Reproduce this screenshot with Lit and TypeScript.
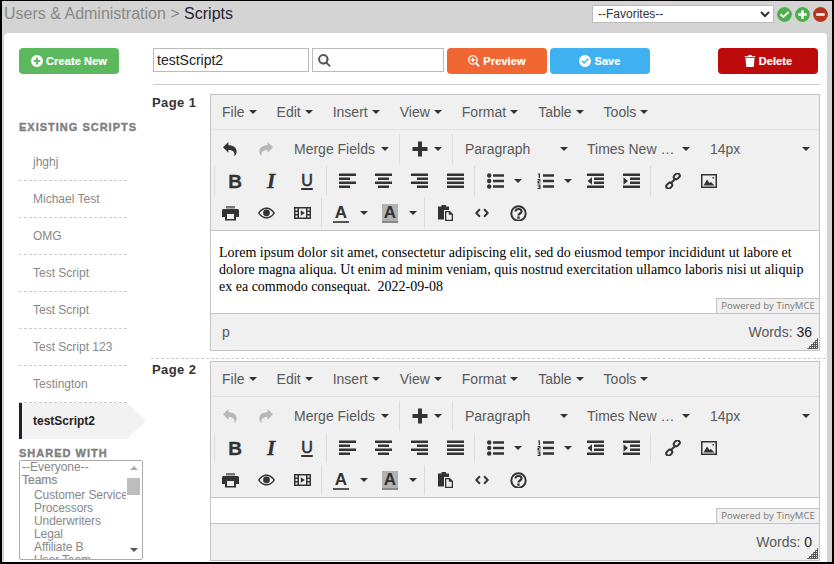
import { LitElement, css, html, svg } from 'lit';
import { customElement, property } from 'lit/decorators.js';

// toolbar glyphs, all on a 16 unit grid
const ICONS: Record<string, unknown> = {
  undo: svg`<path d="M1 6.2 6.4 1v3.2c5 0 8.6 2.4 8.2 7-.2 1.900-1.200 3.200-2.400 4 .9-3.600-.6-6.200-5.800-6.200v2.700z"/>`,
  redo: svg`<path d="M15 6.2 9.600 1v3.2c-5 0-8.600 2.400-8.200 7 .2 1.900 1.200 3.200 2.400 4-.9-3.600.6-6.200 5.800-6.200v2.700z"/>`,
  plus: svg`<path d="M6 .5h4v5.500h5.500v4H10v5.500H6V10H.5V6H6z"/>`,
  alignleft: svg`<path d="M0 .5h17v2.500H0zM0 4.500h11V7H0zM0 8.500h17V11H0zM0 12.500h11V15H0z"/>`,
  aligncenter: svg`<path d="M0 .5h17v2.500H0zM3 4.500h11V7H3zM0 8.500h17V11H0zM3 12.500h11V15H3z"/>`,
  alignright: svg`<path d="M0 .5h17v2.500H0zM6 4.500h11V7H6zM0 8.500h17V11H0zM6 12.500h11V15H6z"/>`,
  justify: svg`<path d="M0 .5h17v2.500H0zM0 4.500h17V7H0zM0 8.500h17V11H0zM0 12.500h17V15H0z"/>`,
  bullist: svg`<circle cx="2.200" cy="2.500" r="2.200"/><circle cx="2.200" cy="8" r="2.200"/><circle cx="2.200" cy="13.500" r="2.200"/><path d="M6 1.300h11v2.400H6zM6 6.800h11v2.400H6zM6 12.300h11v2.400H6z"/>`,
  numlist: svg`<path d="M1 .5h2v4.500H1.700V1.500H1zM.5 6h3v2.500H2v1h1.500v1H.5V7.700h1.700V7H.5zM.5 11.500h3V16h-3v-1h1.800v-.8H1.200v-.9h1.100v-.8H.5zM6 1.300h11v2.400H6zM6 6.800h11v2.400H6zM6 12.300h11v2.400H6z"/>`,
  outdent: svg`<path d="M0 .5h17v2.500H0zM7 4.500h10V7H7zM7 8.500h10V11H7zM0 12.500h17V15H0zM5 4.200v7.600L.5 8z"/>`,
  indent: svg`<path d="M0 .5h17v2.500H0zM7 4.500h10V7H7zM7 8.500h10V11H7zM0 12.500h17V15H0zM.5 4.200v7.600L5 8z"/>`,
  image: svg`<path fill-rule="evenodd" d="M0 1h16v14H0zM1.500 2.500v11h13v-11z"/><path d="M2.500 12.500 6 6.500l2.500 3.500 1.500-1 3.500 3.500zM11.500 4h1.500v1.500h-1.500z"/>`,
  print: svg`<path fill="#777" d="M4 1h9v2.500H4z"/><path fill-rule="evenodd" d="M1.500 4h14c.8 0 1.500.7 1.500 1.500V12h-3v3.500H3V12H0V5.500C0 4.700.7 4 1.500 4zM5 9v5h7V9z"/>`,
  film: svg`<path fill-rule="evenodd" d="M0 2h17v12H0zM1.500 3.500v2h2v-2zM1.500 7v2h2V7zM1.500 10.500v2h2v-2zM13.500 3.500v2h2v-2zM13.500 7v2h2V7zM13.500 10.500v2h2v-2zM5 3.500v9h7v-9z"/><path d="M6.800 5.300 10.800 8l-4 2.700z"/>`,
  paste: svg`<path fill-rule="evenodd" d="M5 0h3v1.500h3V5H6v9.500H0v-13h3.500V0z"/><path fill-rule="evenodd" d="M7 6h5l3 3v7H7zM8.300 7.300v7.400h5.400V9.800h-2.900V7.300z"/>`,
  code: svg`<path d="M5.200 3.500 6.600 4.900 3.700 8l2.900 3.100-1.400 1.400L1 8zM10.800 3.500 15 8l-4.200 4.500-1.400-1.400L12.300 8 9.400 4.900z"/>`,
  search: svg`<path fill-rule="evenodd" d="M6.500 0a6.500 6.500 0 0 1 5.200 10.400l4 4-1.600 1.600-4-4A6.500 6.500 0 1 1 6.500 0zm0 2.600a3.900 3.900 0 1 0 0 7.800 3.900 3.900 0 0 0 0-7.800z"/>`,
  searchplus: svg`<path fill-rule="evenodd" d="M6.500 0a6.500 6.500 0 0 1 5.200 10.400l4 4-1.600 1.600-4-4A6.500 6.500 0 1 1 6.500 0zm0 1.800a4.700 4.700 0 1 0 0 9.400 4.700 4.700 0 0 0 0-9.400z"/><path d="M5.600 3.500h1.800v2.100h2.100v1.800H7.400v2.100H5.600V7.400H3.500V5.600h2.100z"/>`,
  circleplus: svg`<path fill-rule="evenodd" d="M8 0a8 8 0 1 1 0 16A8 8 0 0 1 8 0zM6.700 3.500v3.200H3.500v2.600h3.200v3.200h2.600V9.300h3.200V6.700H9.300V3.500z"/>`,
  circlecheck: svg`<path fill-rule="evenodd" d="M8 0a8 8 0 1 1 0 16A8 8 0 0 1 8 0zm3.700 4.400L6.800 9.200 4.500 7 3.100 8.400l3.700 3.700 6.300-6.300z"/>`,
  trash: svg`<path d="M5 0h4l.6 1.500H14V3H0V1.500h4.400zM1 4h12l-.8 11c0 .6-.5 1-1 1H2.800c-.5 0-1-.4-1-1z"/>`,
};

const link = svg`<g fill="none" stroke="currentColor" stroke-width="2"><rect x="8.500" y="1" width="6.500" height="4.600" rx="2.300" transform="rotate(-45 11.750 3.300)"/><rect x="1" y="10.400" width="6.500" height="4.600" rx="2.300" transform="rotate(-45 4.250 12.700)"/><path d="M5.500 10.500l5-5"/></g>`;
const eye = svg`<path fill-rule="evenodd" d="M8.500 2.500c3.800 0 6.800 2.600 8.500 5.500-1.700 2.900-4.700 5.500-8.500 5.500S1.700 10.900 0 8c1.700-2.900 4.700-5.500 8.500-5.500zm0 1.400C5.700 3.900 3.200 5.600 1.700 8c1.500 2.400 4 4.100 6.800 4.100s5.300-1.700 6.800-4.100c-1.500-2.400-4-4.100-6.800-4.100z"/><circle cx="8.500" cy="7.800" r="3.400"/>`;
const help = svg`<circle cx="8.500" cy="8.500" r="7.200" fill="none" stroke="currentColor" stroke-width="2"/><path fill="none" stroke="currentColor" stroke-width="2.200" d="M5.600 6.500c0-1.600 1.300-2.500 2.900-2.500s3 .9 3 2.500c0 2-3 2-3 4"/><rect x="7.300" y="11.500" width="2.400" height="2.200"/>`;

function icon(name: string, cls = '') {
  const body = name === 'link' ? link : name === 'eye' ? eye : name === 'help' ? help : ICONS[name];
  const w = name === 'plus' || name === 'image' || name.startsWith('circle') || name.startsWith('search') ? 16 : name === 'trash' ? 14 : 17;
  return html`<svg class="ico ${cls}" viewBox="0 0 ${w} 16" width="${w}" height="16" fill="currentColor">${body}</svg>`;
}

const MENUS = ['File', 'Edit', 'Insert', 'View', 'Format', 'Table', 'Tools'];

@customElement('tiny-editor')
export class TinyEditor extends LitElement {
  @property() words = '0';
  @property() path = '';
  @property({ type: Boolean }) canUndo = false;

  static styles = css`
    :host {
      display: block;
      width: 610px;
      box-sizing: border-box;
      border: 1px solid #c4c4c4;
      background: #f0f0f0;
      color: #595959;
      font: 14px 'Liberation Sans', Arial, sans-serif;
    }
    .menubar {
      height: 34px;
      display: flex;
      align-items: center;
      padding-left: 1px;
      border-bottom: 1px solid #e2e2e2;
    }
    .menu {
      display: flex;
      align-items: center;
      gap: 4px;
      padding: 0 10px;
    }
    .caret {
      display: inline-block;
      width: 0;
      height: 0;
      border: 4px solid transparent;
      border-top-color: #333;
      border-bottom: 0;
    }
    .toolbar {
      height: 101px;
      box-sizing: border-box;
      padding-top: 4px;
      border-bottom: 1px solid #c4c4c4;
    }
    .row {
      height: 32px;
      display: flex;
      align-items: flex-start;
    }
    .row.second {
      padding-left: 2px;
    }
    .group {
      display: flex;
      height: 30px;
      align-items: center;
      padding-left: 2px;
    }
    .group.first {
      padding-left: 1px;
    }
    .group.wide {
      padding-left: 4px;
    }
    .group.sep {
      border-left: 1px solid #dcdcdc;
      margin-left: 1px;
    }
    .group.tight {
      padding-left: 1px;
    }
    .group.pushed {
      margin-left: 3px;
      padding-left: 3px;
    }
    .btn {
      width: 36px;
      height: 30px;
      display: flex;
      align-items: center;
      justify-content: center;
      color: #333;
      flex: none;
    }
    .btn.off {
      color: #b8b8b8;
    }
    .letter {
      font-size: 19px;
      line-height: 1;
      font-weight: 700;
      -webkit-text-stroke: 0.3px #333;
    }
    .letter.it {
      font-style: italic;
      font-family: 'Liberation Serif', serif;
      font-size: 21px;
    }
    .letter.un {
      font-size: 16px;
      font-weight: 400;
      text-decoration: underline;
      text-decoration-thickness: 2px;
      text-underline-offset: 2px;
      -webkit-text-stroke: 0.6px #333;
    }
    .split {
      display: flex;
      align-items: center;
      width: 50px;
      flex: none;
    }
    .split .caret {
      margin-left: 1px;
    }
    .split.small {
      width: 49px;
    }
    .split.small .caret {
      margin-left: -4px;
    }
    .split.color {
      width: 49px;
    }
    .swatch {
      width: 16px;
      height: 19px;
      display: flex;
      align-items: center;
      justify-content: center;
      font-size: 17px;
      line-height: 17px;
      font-weight: 700;
      border-bottom: 2px solid #555;
      box-sizing: border-box;
    }
    .swatch.bg {
      background: #b2b2b2;
      border-color: #888;
    }
    .pick {
      display: flex;
      align-items: center;
      justify-content: space-between;
      height: 30px;
      padding-left: 10px;
      box-sizing: border-box;
      flex: none;
    }
    .pick .caret {
      margin-right: 9px;
    }
    .pick.last {
      padding-left: 11px;
    }
    .content {
      position: relative;
      background: #fff;
      border-bottom: 1px solid #c4c4c4;
      color: #000;
      font: 14px/17px 'Liberation Serif', 'Times New Roman', serif;
      padding: 0 8px;
      box-sizing: border-box;
      min-height: 26px;
      overflow: hidden;
    }
    ::slotted(p) {
      margin: 13px 0 18px;
    }
    .brand {
      position: absolute;
      right: 0;
      bottom: 0;
      height: 15px;
      width: 103px;
      box-sizing: border-box;
      background: #f0f0f0;
      border: 1px solid #c4c4c4;
      border-width: 1px 0 0 1px;
      color: #777;
      font: 9.500px/14px 'Open Sans', sans-serif;
      letter-spacing: 0.05px;
      text-align: center;
      white-space: nowrap;
    }
    .status {
      position: relative;
      height: 36px;
      display: flex;
      align-items: center;
      justify-content: space-between;
      padding: 0 7px 0 11px;
    }
    .status b {
      font-weight: 400;
      color: #222;
    }
    .grip {
      position: absolute;
      right: 1px;
      bottom: 1px;
      width: 11px;
      height: 11px;
      background: repeating-linear-gradient(0deg, #555 0 1px, transparent 1px 2px),
        repeating-linear-gradient(90deg, #555 0 1px, #f0f0f0 1px 2px);
      clip-path: polygon(100% 0, 100% 100%, 0 100%);
    }
  `;

  private btn(name: string, off = false) {
    return html`<span class="btn ${off ? 'off' : ''}">${icon(name)}</span>`;
  }

  private split(name: string, small = false) {
    return html`<span class="split ${small ? 'small' : ''}">${this.btn(name)}<span class="caret"></span></span>`;
  }

  private pick(label: string, width: number, cls = '') {
    return html`<span class="pick ${cls}" style="width:${width}px"><span>${label}</span><span class="caret"></span></span>`;
  }

  private swatch(bg: boolean) {
    return html`<span class="split color"
      ><span class="btn"><span class="swatch ${bg ? 'bg' : ''}">A</span></span><span class="caret"></span
    ></span>`;
  }

  render() {
    return html`
      <div class="menubar">
        ${MENUS.map(m => html`<span class="menu">${m}<span class="caret"></span></span>`)}
      </div>
      <div class="toolbar">
        <div class="row">
          <div class="group first">
            ${this.btn('undo', !this.canUndo)}${this.btn('redo', true)} ${this.pick('Merge Fields', 114)}
          </div>
          <div class="group sep">${this.split('plus', true)}</div>
          <div class="group sep">
            ${this.pick('Paragraph', 122)}${this.pick('Times New …', 122)}${this.pick('14px', 120, 'last')}
          </div>
        </div>
        <div class="row second">
          <div class="group sep">
            <span class="btn"><span class="letter">B</span></span>
            <span class="btn"><span class="letter it">I</span></span>
            <span class="btn"><span class="letter un">U</span></span>
          </div>
          <div class="group sep">
            ${this.btn('alignleft')}${this.btn('aligncenter')}${this.btn('alignright')}${this.btn('justify')}
          </div>
          <div class="group sep">
            ${this.split('bullist')}${this.split('numlist')}${this.btn('outdent')}${this.btn('indent')}
          </div>
          <div class="group sep wide">${this.btn('link')}${this.btn('image')}</div>
        </div>
        <div class="row">
          <div class="group first">${this.btn('print')}${this.btn('eye')}${this.btn('film')}</div>
          <div class="group sep tight">${this.swatch(false)}${this.swatch(true)}</div>
          <div class="group sep pushed">${this.btn('paste')}${this.btn('code')}${this.btn('help')}</div>
        </div>
      </div>
      <div class="content">
        <slot></slot>
        <span class="brand">Powered by TinyMCE</span>
      </div>
      <div class="status">
        <span>${this.path}</span>
        <span>Words: <b>${this.words}</b></span>
        <span class="grip"></span>
      </div>
    `;
  }
}

const SCRIPTS = ['jhghj', 'Michael Test', 'OMG', 'Test Script', 'Test Script', 'Test Script 123', 'Testington'];
const TEAMS = ['Customer Service', 'Processors', 'Underwriters', 'Legal', 'Affiliate B', 'User Team'];

@customElement('app-root')
export class AppRoot extends LitElement {
  static styles = css`
    :host {
      display: flex;
      flex-direction: column;
      width: 834px;
      height: 564px;
      box-sizing: border-box;
      overflow: hidden;
      background: #d4d4d4;
      border: solid #000;
      border-width: 1px 2px 2px 2px;
      font: 12px 'Liberation Sans', Arial, sans-serif;
    }
    .head {
      height: 32px;
      flex: none;
      display: flex;
      align-items: flex-start;
      justify-content: space-between;
      padding: 4px 4px 0 2px;
      box-sizing: border-box;
      font-size: 16px;
      line-height: 18px;
      color: #888;
    }
    .crumb b {
      font-weight: 400;
      color: #2a2233;
    }
    .fav {
      display: flex;
      align-items: center;
      gap: 3px;
    }
    .fav select {
      width: 182px;
      height: 18px;
      box-sizing: border-box;
      margin: 0;
      padding: 0 1px;
      border: 1px solid #bbb;
      background: #fff;
      color: #333;
      font: 12px 'Liberation Sans', Arial, sans-serif;
      border-radius: 0;
    }
    .dot {
      width: 15px;
      height: 15px;
      border-radius: 50%;
      display: flex;
      align-items: center;
      justify-content: center;
      background: #fff;
    }
    .dot svg {
      width: 15px;
      height: 15px;
    }
    .dot.ok {
      color: #4cae4c;
    }
    .dot.no {
      color: #b5371d;
    }
    .card {
      flex: 1;
      min-height: 0;
      margin: 0 5px 0 2px;
      background: #fff;
      border-radius: 4px 4px 0 0;
      display: grid;
      grid-template-columns: 147px 1fr;
    }
    .side {
      padding: 15px 0 0 15px;
      color: #888;
      overflow: hidden;
    }
    .action {
      width: 100px;
      height: 26px;
      flex: none;
      border-radius: 4px;
      display: flex;
      align-items: center;
      justify-content: center;
      gap: 3px;
      color: #fff;
      font-size: 11px;
      font-weight: 700;
      letter-spacing: 0.1px;
      -webkit-text-stroke: 0.2px #fff;
    }
    .action svg {
      width: 12px;
      height: 12px;
    }
    .green {
      background: #5cb85c;
    }
    .orange {
      background: #f06733;
    }
    .blue {
      background: #3fb0f0;
    }
    .red {
      background: #bd0b0b;
      margin-left: auto;
    }
    .title {
      font-size: 11px;
      line-height: 13px;
      font-weight: 700;
      letter-spacing: 1px;
      color: #808080;
      -webkit-text-stroke: 0.4px #808080;
    }
    .title.first {
      margin-top: 47px;
      margin-bottom: 10px;
    }
    .item {
      position: relative;
      width: 108px;
      height: 37px;
      box-sizing: border-box;
      padding-left: 14px;
      display: flex;
      align-items: center;
      border-bottom: 1px dashed #ccc;
    }
    .item.active {
      height: 36px;
      border-bottom: 0;
      border-left: 3px solid #2a1a33;
      padding-left: 11px;
      background: #f2f2f2;
      color: #222;
      font-weight: 700;
    }
    .item.active::after {
      content: '';
      position: absolute;
      left: 105px;
      top: 0;
      border: 18px solid transparent;
      border-left: 19px solid #f2f2f2;
      border-right: 0;
    }
    .title.second {
      margin-top: 8px;
    }
    .list {
      position: relative;
      width: 124px;
      height: 100px;
      box-sizing: border-box;
      border: 1px solid #aaa;
      border-radius: 2px;
      overflow: hidden;
      line-height: 13px;
      padding: 0 1px 0 2px;
    }
    .list .team {
      margin-bottom: 2px;
      -webkit-text-stroke: 0.2px #888;
    }
    .list .opt {
      padding-left: 12px;
      white-space: nowrap;
      letter-spacing: -0.1px;
    }
    .bar {
      position: absolute;
      top: 0;
      bottom: 0;
      right: 0;
      width: 16px;
      background: #fff;
    }
    .thumb {
      position: absolute;
      left: 1px;
      top: 17px;
      width: 13px;
      height: 17px;
      background: #bdbdbd;
    }
    .arrow {
      position: absolute;
      left: 4px;
      width: 0;
      height: 0;
      border: 4px solid transparent;
    }
    .arrow.up {
      top: 5px;
      border-top: 0;
      border-bottom-color: #aaa;
    }
    .arrow.down {
      bottom: 7px;
      border-bottom: 0;
      border-top-color: #555;
    }
    .main {
      padding-top: 15px;
      min-width: 0;
      overflow: hidden;
    }
    .tools {
      display: flex;
      gap: 3px;
      margin: 0 9px 0 2px;
      align-items: flex-start;
    }
    .name,
    .find {
      height: 24px;
      box-sizing: border-box;
      border: 1px solid #bbb;
      background: #fff;
    }
    .name {
      width: 156px;
      padding: 0 3px;
      font: 14px 'Liberation Sans', Arial, sans-serif;
      color: #222;
      outline: none;
    }
    .find {
      width: 132px;
      display: flex;
      align-items: center;
      gap: 4px;
      padding-left: 5px;
      color: #555;
    }
    .find svg {
      width: 13px;
      height: 13px;
    }
    .find input {
      border: 0;
      outline: none;
      min-width: 0;
      flex: 1;
    }
    hr {
      margin: 10px 7px 9px 2px;
      border: 0;
      border-top: 1px solid #ccc;
    }
    .page {
      display: grid;
      grid-template-columns: 58px 610px;
      padding-left: 1px;
    }
    .page h4 {
      margin: 1px 0 0;
      font-size: 13px;
      line-height: 15px;
      color: #333;
      letter-spacing: 0.4px;
    }
    .split-line {
      border-top: 1px dashed #ccc;
      margin: 7px 1px 2px 0;
    }
  `;

  render() {
    return html`
      <div class="head">
        <span class="crumb">Users &amp; Administration &gt; <b>Scripts</b></span>
        <div class="fav">
          <select><option>--Favorites--</option></select>
          <span class="dot ok">${icon('circlecheck')}</span>
          <span class="dot ok">${icon('circleplus')}</span>
          <span class="dot no">
            <svg viewBox="0 0 16 16" fill="currentColor"><path fill-rule="evenodd" d="M8 0a8 8 0 1 1 0 16A8 8 0 0 1 8 0zM3.500 6.700v2.600h9V6.700z"/></svg>
          </span>
        </div>
      </div>
      <div class="card">
        <div class="side">
          <div class="action green">${icon('circleplus')}Create New</div>
          <div class="title first">EXISTING SCRIPTS</div>
          ${SCRIPTS.map(s => html`<div class="item">${s}</div>`)}
          <div class="item active">testScript2</div>
          <div class="title second">SHARED WITH</div>
          <div class="list">
            <div>--Everyone--</div>
            <div class="team">Teams</div>
            ${TEAMS.map(t => html`<div class="opt">${t}</div>`)}
            <div class="bar">
              <span class="arrow up"></span>
              <span class="thumb"></span>
              <span class="arrow down"></span>
            </div>
          </div>
        </div>
        <div class="main">
          <div class="tools">
            <input class="name" .value=${'testScript2'} />
            <div class="find">${icon('search')}<input /></div>
            <div class="action orange">${icon('searchplus')}Preview</div>
            <div class="action blue">${icon('circlecheck')}Save</div>
            <div class="action red">${icon('trash')}Delete</div>
          </div>
          <hr />
          <div class="page">
            <h4>Page 1</h4>
            <tiny-editor words="36" path="p" canUndo>
              <p>
                Lorem ipsum dolor sit amet, consectetur adipiscing elit, sed do eiusmod tempor incididunt ut labore et
                dolore magna aliqua. Ut enim ad minim veniam, quis nostrud exercitation ullamco laboris nisi ut aliquip
                ex ea commodo consequat.&nbsp; 2022-09-08
              </p>
            </tiny-editor>
          </div>
          <div class="split-line"></div>
          <div class="page">
            <h4>Page 2</h4>
            <tiny-editor words="0"></tiny-editor>
          </div>
        </div>
      </div>
    `;
  }
}
